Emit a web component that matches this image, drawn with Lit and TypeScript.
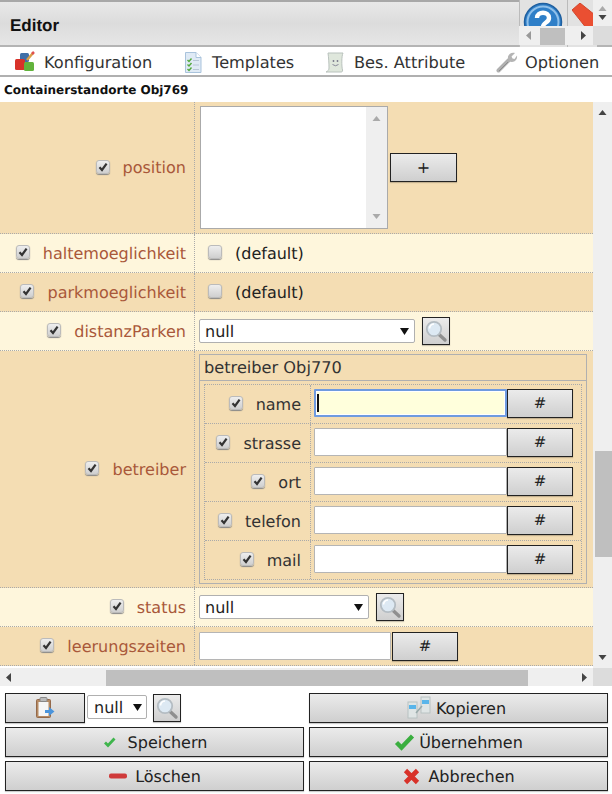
import { LitElement, html, css } from "lit";
import { customElement } from "lit/decorators.js";

const check = html`<span class="cb on"><svg width="10" height="10" viewBox="0 0 10 10"><path d="M1.5 5.2 L4 8 L8.6 1.6" fill="none" stroke="#333" stroke-width="2.2"/></svg></span>`;
const uncheck = html`<span class="cb"></span>`;
const lens = html`<svg width="24" height="24" viewBox="0 0 24 24">
  <path d="M14.5 15 L21 21" stroke="#8f8f8f" stroke-width="3.4" stroke-linecap="round"/>
  <circle cx="10" cy="10" r="7.2" fill="#dde9f3" stroke="#b4bcc2" stroke-width="1.8"/>
  <path d="M5.5 9.5 A5 5 0 0 1 10 5" fill="none" stroke="#fff" stroke-width="1.6"/>
</svg>`;
const arrow = (d: string, c = "#555") => html`<svg width="9" height="9" viewBox="0 0 9 9"><path d=${d} fill=${c}/></svg>`;
const UP = "M0.5 7 L4.5 2 L8.5 7Z", DOWN = "M0.5 2 L4.5 7 L8.5 2Z", LEFT = "M7 0 L2 4.5 L7 9Z", RIGHT = "M2 0 L7 4.5 L2 9Z";

const icons = {
  conf: html`<svg width="22" height="22" viewBox="0 0 22 22">
    <rect x="6" y="2" width="9" height="9" rx="1.5" fill="#3f6fa8"/>
    <rect x="1" y="8" width="10" height="11" rx="1.5" fill="#d8322a"/>
    <rect x="10" y="11" width="10" height="9" rx="1.5" fill="#62b33c"/>
    <path d="M13 9 L19 2" stroke="#d8a04a" stroke-width="2.5"/><path d="M18 3 L20 1" stroke="#e05050" stroke-width="2.5"/>
  </svg>`,
  tmpl: html`<svg width="20" height="24" viewBox="0 0 20 24">
    <path d="M2.5 2.5 H13 L18 7.5 V22.5 H2.5Z" fill="#dfeaf5" stroke="#a9c3dc"/>
    <path d="M13 2.5 V7.5 H18" fill="#fff" stroke="#a9c3dc"/>
    <path d="M4.5 10 L6 11.5 L8.5 8.5 M4.5 14.5 L6 16 L8.5 13 M4.5 19 L6 20.5 L8.5 17.5" fill="none" stroke="#53a83e" stroke-width="1.4"/>
    <path d="M10 10.5 H16 M10 15 H16 M10 19.5 H16" stroke="#b7c6d6"/>
  </svg>`,
  attr: html`<svg width="20" height="22" viewBox="0 0 20 22">
    <path d="M3 2 H18 C16.5 5 16.5 15 17.5 19 C17.8 20.5 17 21 16 21 H1 C3 20 4 19 4 17 C4 12 3.6 6 3 2Z" fill="#dfe7dc" stroke="#b9c2bd"/>
    <circle cx="8.5" cy="10" r="0.9" fill="#778"/><circle cx="12.5" cy="10" r="0.9" fill="#778"/>
    <path d="M7.5 13.5 Q10.5 16 13.5 13.5" fill="none" stroke="#889" />
  </svg>`,
  wrench: html`<svg width="22" height="22" viewBox="0 0 22 22">
    <path d="M2.5 19.5 L13 9" stroke="#b0b0b0" stroke-width="4" stroke-linecap="round"/>
    <path d="M12 5.5 C13 2.5 16 1 19 2 L15.5 5.5 L16.5 7.5 L18.5 8 L21 4.5 C21.5 8 19.5 11 16 11 C14 11.2 11.5 9 12 5.5Z" fill="#b4b4b4"/>
    <path d="M3 20 L12 11" stroke="#8c8c8c" stroke-width="1"/>
  </svg>`,
  help: html`<svg width="42" height="42" viewBox="0 0 42 42">
    <circle cx="21" cy="21" r="18.5" fill="#2f7fc8" stroke="#1f5f9f" stroke-width="1.5"/>
    <circle cx="21" cy="21" r="15.5" fill="none" stroke="#8fc0ea" stroke-width="2"/>
    <path d="M15 17 C15 10 27 10 27 17 C27 22 21 21 21 26" fill="none" stroke="#fff" stroke-width="4.4"/>
    <rect x="18.5" y="28" width="5" height="5" fill="#fff"/>
  </svg>`,
  exit: html`<svg width="34" height="40" viewBox="0 0 34 40">
    <path d="M0 7 L8 0 L23 12 V26 H15Z" fill="#ea4f32" stroke="#d2452a"/>
  </svg>`,
  paste: html`<svg width="20" height="22" viewBox="0 0 20 22">
    <rect x="1.5" y="2.5" width="14" height="18" rx="1" fill="#b58a63" stroke="#94694a"/>
    <rect x="3.5" y="5" width="10" height="14" fill="#f6f6f6"/>
    <rect x="5" y="0.5" width="7" height="4" rx="1" fill="#bbb" stroke="#888"/>
    <path d="M10 13 H14 V10 L19.5 14.5 L14 19 V16 H10Z" fill="#4a94dc"/>
  </svg>`,
  small: html`<svg width="15" height="12" viewBox="0 0 15 12"><path d="M3 6.5 L6 9.5 L12.5 2.5" fill="none" stroke="#3fb54c" stroke-width="2.8"/></svg>`,
  ok: html`<svg width="22" height="18" viewBox="0 0 22 18"><path d="M2.5 9.5 L7.5 14.5 L18.5 3" fill="none" stroke="#3aae3f" stroke-width="4.4"/></svg>`,
  minus: html`<svg width="20" height="8" viewBox="0 0 20 8"><rect x="1" y="1.5" width="18" height="5" rx="2" fill="#cf3a3a"/></svg>`,
  x: html`<svg width="18" height="18" viewBox="0 0 18 18"><path d="M3.5 3.5 L15.5 15.5 M15.5 3.5 L3.5 15.5" stroke="#d8322a" stroke-width="4.6"/></svg>`,
  copy: html`<svg width="24" height="24" viewBox="0 0 24 24">
    <rect x="1" y="6" width="9" height="16" fill="#dfe5e5" stroke="#b8c2c2"/><rect x="2" y="9" width="7" height="4" fill="#59b5ea"/>
    <rect x="14" y="1" width="9" height="16" fill="#dfe5e5" stroke="#b8c2c2"/><rect x="15" y="4" width="7" height="4" fill="#59b5ea"/>
    <path d="M9 17 L15 10" stroke="#9aa" stroke-width="1.5"/>
  </svg>`,
};

const sel = (w: number) => html`<span class="select" style="width:${w}px"><span>null</span><svg width="9" height="7" viewBox="0 0 9 7"><path d="M0 0 H9 L4.5 7Z" fill="#111"/></svg></span>`;
const lensBtn = html`<span class="btn lens">${lens}</span>`;

@customElement("app-root")
export class AppRoot extends LitElement {
  static styles = css`
    :host { display: block; width: 612px; height: 794px; overflow: hidden; background: #fff; font-family: "DejaVu Sans", sans-serif; color: #222; position: relative; text-rendering: geometricPrecision; }
    * { box-sizing: border-box; }
    .header { height: 47px; display: flex; align-items: center; border-top: 2px solid #a8a8a8; border-bottom: 2px solid #b4b4b4; background: linear-gradient(#e8e8e8, #dcdcdc, #e6e6e6); padding: 4px 0 0 10px; font-family: "Liberation Sans", sans-serif; font-weight: bold; font-size: 17px; color: #111; position: relative; }
    .hbtn { position: absolute; top: -2px; height: 47px; border-left: 1px solid #bbb; overflow: hidden; background: #e2e2e2; }
    .hbtn svg { display: block; }
    .help { left: 519px; width: 49px; padding: 1px 0 0 2px; }
    .exit { left: 567px; width: 30px; padding: 3px 0 0 4px; }
    .hs { position: absolute; left: 519px; top: 24px; width: 74px; height: 19px; background: #efefef; display: flex; align-items: center; justify-content: space-between; padding: 0 5px; }
    .hs i { position: absolute; left: 21px; top: 2px; width: 25px; height: 17px; background: #bfbfbf; }
    .hs-corner { position: absolute; left: 593px; top: 24px; width: 19px; height: 19px; background: #dcdcdc; }
    .vs { position: absolute; left: 593px; top: -2px; width: 19px; height: 26px; background: #efefef; display: flex; flex-direction: column; align-items: center; justify-content: center; gap: 0; }
    .tabs { height: 30px; position: relative; border-bottom: 2px solid #b0b0b0; font-size: 16.2px; color: #333; }
    .tab { display: flex; align-items: center; position: absolute; top: 3px; height: 24px; }
    .title { height: 25px; display: flex; align-items: center; padding-left: 4px; font-weight: bold; font-size: 12px; color: #111; }
    .scroll { height: 584px; position: relative; overflow: hidden; }
    .row { display: grid; grid-template-columns: 195px 398px; width: 593px; border-bottom: 1px dotted #aaa; }
    .row.a { background: #f4ddb3; }
    .row.b { background: #fef6dc; }
    .lab { border-right: 1px dotted #aaa; display: flex; align-items: center; justify-content: flex-end; gap: 13px; padding-right: 8px; color: #a9583a; font-size: 16.05px; }
    .val { display: flex; align-items: center; padding-left: 4px; font-size: 16px; gap: 7px; }
    .val.def { gap: 13px; padding-left: 13px; }
    .val.tight { gap: 0; }
    .val.top { align-items: flex-start; }
    .cb { width: 14px; height: 14px; margin-top: -2px; border: 1px solid #bbb; border-radius: 3px; background: linear-gradient(#eee,#cfcfcf); display: inline-flex; align-items: center; justify-content: center; box-shadow: 0 1px 1px #888; flex: none; }
    .h38 { height: 39px; }
    .tall { height: 132px; }
    .big { height: 237px; }
    .listbox { width: 188px; height: 123px; margin-left: 1px; background: #fff; border: 1px solid #aaa; display: flex; justify-content: flex-end; }
    .listbox .sb { width: 21px; background: #efefef; display: flex; flex-direction: column; align-items: center; justify-content: space-between; padding: 7px 0; }
    .btn { display: inline-flex; align-items: center; justify-content: center; gap: 8px; border: 1px solid #222; background: linear-gradient(#ebebeb,#cfcfcf); color: #222; font-size: 15px; box-shadow: 0 1px 1px rgba(0,0,0,.2); flex: none; }
    .btn.lens { width: 28px; height: 28px; }
    .btn.plus { width: 67px; height: 29px; margin: -1px 0 0 -5px; font-size: 16px; }
    .select { height: 24px; background: #fff; border: 1px solid #b0b0b0; border-radius: 2px; display: inline-flex; align-items: center; justify-content: space-between; padding: 0 5px; font-size: 16px; color: #222; flex: none; }
    .inp { height: 28px; width: 193px; background: #fff; border: 1px solid #b5b5b5; border-radius: 1px; flex: none; }
    .inp.w192 { width: 192px; }
    .inp.focus { background: #ffffdc; border: 2px solid #6f9be0; box-shadow: inset 0 0 0 1px #fff; position: relative; }
    .inp.focus::after { content: ""; position: absolute; left: 1px; top: 3px; width: 1.5px; height: 18px; background: #111; }
    .hash { width: 66px; height: 29px; }
    .hash.sep { margin-left: 1px; }
    .fs { width: 388px; margin-top: 3px; border: 1px solid #b0b0b0; height: 230px; }
    .fs .cap { height: 26px; padding-left: 4px; display: flex; align-items: center; border-bottom: 1px solid #b0b0b0; font-size: 16.2px; color: #333; }
    .inner { margin: 3px 4px 0; border: 1px dotted #aaa; }
    .irow { display: grid; grid-template-columns: 106px 1fr; height: 39px; border-bottom: 1px dotted #aaa; }
    .irow:last-child { border-bottom: none; height: 38px; }
    .ilab { border-right: 1px dotted #aaa; display: flex; align-items: center; justify-content: flex-end; gap: 13px; padding-right: 9px; font-size: 16px; color: #333; }
    .ival { display: flex; align-items: center; padding: 0 0 2px 3px; }
    .sbv { position: absolute; left: 593px; top: 0; width: 19px; height: 566px; background: #efefef; display: flex; flex-direction: column; align-items: center; justify-content: space-between; padding: 6px 0; }
    .sbv i { position: absolute; left: 2px; top: 349px; width: 17px; height: 106px; background: #bfbfbf; }
    .sbh { position: absolute; left: 0; top: 566px; width: 593px; height: 18px; background: #efefef; display: flex; align-items: center; justify-content: space-between; padding: 0 4px; }
    .sbh i { position: absolute; left: 106px; top: 2px; height: 16px; width: 422px; background: #bfbfbf; }
    .corner { position: absolute; left: 593px; top: 566px; width: 19px; height: 18px; background: #dcdcdc; }
    .foot { display: grid; grid-template-columns: 299px 299px; column-gap: 5px; row-gap: 4px; padding: 7px 4px 0 5px; grid-auto-rows: 30px; }
    .foot .btn.wide { font-size: 16px; width: 100%; height: 100%; }
    .foot .g3 { gap: 3px; }
    .foot .pr4 { padding-right: 4px; }
    .mix { display: flex; align-items: center; gap: 2px; }
    .mix .paste { width: 80px; height: 30px; }
    .mix .select { height: 24px; padding: 0 4px 0 6px; margin-top: -2px; }
    .mix .lens { width: 28px; height: 28px; margin: -1px 0 0 4px; }
    .ml-3 { margin-left: -3px; }
    .ml3 { margin-left: 3px; }
    .ml-1 { margin-left: -1px; }
  `;

  render() {
    const tab = (x: number, icon: unknown, t: string, gap = 8) => html`<div class="tab" style="left:${x}px;gap:${gap}px">${icon}<span>${t}</span></div>`;
    const irow = (n: string, f = false) => html`<div class="irow"><div class="ilab">${check}<span>${n}</span></div>
      <div class="ival"><span class="inp ${f ? "focus" : ""}"></span><span class="btn hash">#</span></div></div>`;
    const lab = (n: string) => html`<div class="lab">${check}<span>${n}</span></div>`;
    return html`
      <div class="header">Editor
        <div class="hbtn help">${icons.help}</div>
        <div class="hbtn exit">${icons.exit}</div>
        <div class="vs">${arrow(UP, "#aaa")}${arrow(DOWN, "#444")}</div>
        <div class="hs"><i></i>${arrow(LEFT, "#999")}${arrow(RIGHT, "#444")}</div>
        <div class="hs-corner"></div>
      </div>
      <div class="tabs">
        ${tab(14, icons.conf, "Konfiguration")}
        ${tab(183, icons.tmpl, "Templates", 9)}
        ${tab(325, icons.attr, "Bes. Attribute", 9)}
        ${tab(496, icons.wrench, "Optionen", 7)}
      </div>
      <div class="title">Containerstandorte Obj769</div>
      <div class="scroll">
        <div class="row a tall">${lab("position")}
          <div class="val"><span class="listbox"><span class="sb">${arrow(UP, "#aaa")}${arrow(DOWN, "#aaa")}</span></span><span class="btn plus">+</span></div></div>
        <div class="row b h38">${lab("haltemoeglichkeit")}<div class="val def">${uncheck}<span>(default)</span></div></div>
        <div class="row a h38">${lab("parkmoeglichkeit")}<div class="val def">${uncheck}<span>(default)</span></div></div>
        <div class="row b h38">${lab("distanzParken")}<div class="val">${sel(216)}${lensBtn}</div></div>
        <div class="row a big">${lab("betreiber")}
          <div class="val top"><div class="fs"><div class="cap">betreiber Obj770</div>
            <div class="inner">${irow("name", true)}${irow("strasse")}${irow("ort")}${irow("telefon")}${irow("mail")}</div></div></div></div>
        <div class="row b h38">${lab("status")}<div class="val">${sel(170)}${lensBtn}</div></div>
        <div class="row a h38">${lab("leerungszeiten")}<div class="val tight"><span class="inp w192"></span><span class="btn hash sep">#</span></div></div>
        <div class="sbv"><i></i>${arrow(UP, "#444")}${arrow(DOWN, "#444")}</div>
        <div class="sbh"><i></i>${arrow(LEFT, "#444")}${arrow(RIGHT, "#444")}</div>
        <div class="corner"></div>
      </div>
      <div class="foot">
        <div class="mix"><span class="btn paste">${icons.paste}</span>${sel(60)}<span class="btn lens">${lens}</span></div>
        <span class="btn wide pr4">${icons.copy}<span class="ml-3">Kopieren</span></span>
        <span class="btn wide">${icons.small}<span class="ml3">Speichern</span></span>
        <span class="btn wide g3">${icons.ok}<span>Übernehmen</span></span>
        <span class="btn wide">${icons.minus}<span class="ml-1">Löschen</span></span>
        <span class="btn wide">${icons.x}<span>Abbrechen</span></span>
      </div>
    `;
  }
}
